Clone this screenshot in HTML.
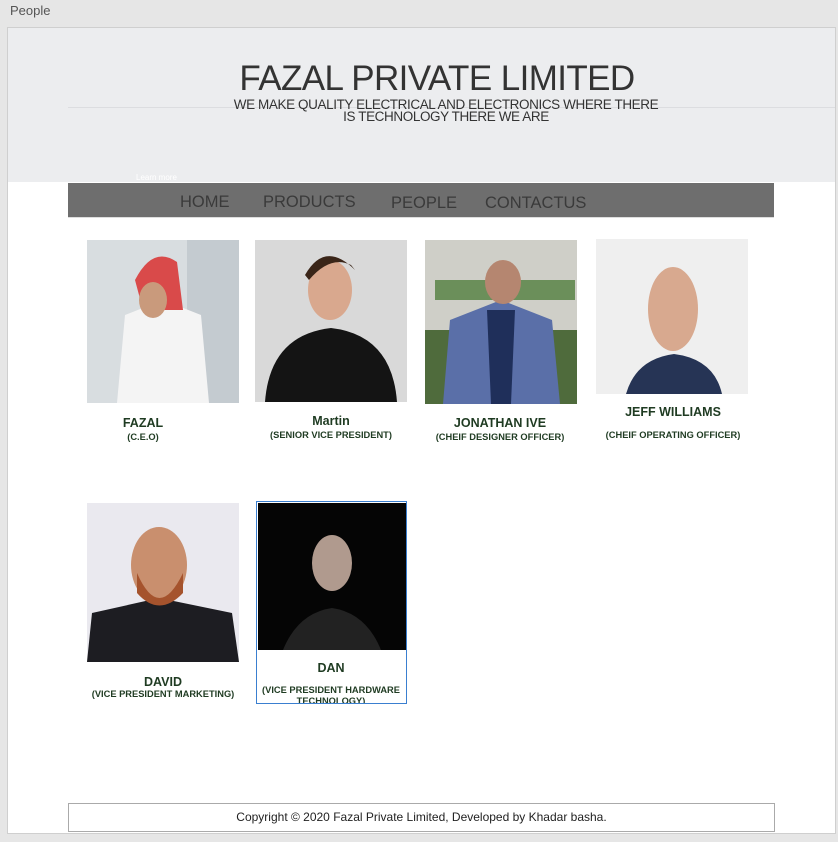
<!DOCTYPE html>
<html><head><meta charset="utf-8"><style>
*{margin:0;padding:0;box-sizing:border-box}
body{width:838px;height:842px;background:#e6e6e6;position:relative;font-family:"Liberation Sans",sans-serif;overflow:hidden}
.a{position:absolute}
.c{position:absolute;text-align:center;white-space:nowrap;transform:translateX(-50%)}
.n{font-weight:bold;font-size:12.5px;color:#1f3b22}
.s{font-weight:bold;font-size:9.3px;color:#1f3b22}
.nav{font-size:16.5px;color:#3a3a3a}
</style></head><body>
<div class="a" style="left:10px;top:3px;font-size:13px;color:#555">People</div>
<div class="a" style="left:7px;top:27px;width:829px;height:807px;background:#fff;border:1px solid #cfcfcf"></div>
<div class="a" style="left:8px;top:28px;width:827px;height:154px;background:#ecedef"></div>
<div class="a" style="left:68px;top:107px;width:767px;height:1px;background:#dcdde0"></div>
<div class="c" style="left:437px;top:59px;font-size:35px;color:#333;letter-spacing:-0.6px">FAZAL PRIVATE LIMITED</div>
<div class="c" style="left:446px;top:99px;font-size:13.5px;line-height:12px;color:#333;letter-spacing:-0.4px">WE MAKE QUALITY ELECTRICAL AND ELECTRONICS WHERE THERE<br>IS TECHNOLOGY THERE WE ARE</div>
<div class="a" style="left:136px;top:173px;font-size:8px;color:#fff">Learn more</div>
<div class="a" style="left:68px;top:183px;width:706px;height:35px;background:#6e6e6e;border-bottom:1px solid #ddd"></div>
<div class="a nav" style="left:180px;top:193px">HOME</div>
<div class="a nav" style="left:263px;top:193px">PRODUCTS</div>
<div class="a nav" style="left:391px;top:194px">PEOPLE</div>
<div class="a nav" style="left:485px;top:194px">CONTACTUS</div>

<svg class="a" style="left:87px;top:240px" width="152" height="163"><rect width="152" height="163" fill="#d8dde0"/><rect x="100" width="52" height="163" fill="#c4cbd0"/><path d="M30 163 L38 75 L76 60 L114 75 L122 163Z" fill="#f4f4f4"/><path d="M48 40 Q66 5 90 22 L96 70 L56 70Z" fill="#d94a4a"/><ellipse cx="66" cy="60" rx="14" ry="18" fill="#c99a7c"/></svg>
<svg class="a" style="left:255px;top:240px" width="152" height="162"><rect width="152" height="162" fill="#d9d9d9"/><path d="M10 162 Q15 95 76 88 Q137 95 142 162Z" fill="#141414"/><ellipse cx="75" cy="50" rx="22" ry="30" fill="#d9a88e"/><path d="M50 35 Q70 0 100 30 L96 25 Q75 15 54 40Z" fill="#3a2518"/></svg>
<svg class="a" style="left:425px;top:240px" width="152" height="164"><rect width="152" height="164" fill="#cfcfc8"/><rect y="90" width="152" height="74" fill="#4f6b3c"/><rect x="10" y="40" width="140" height="20" fill="#6b8f5a"/><path d="M18 164 L25 80 L76 60 L127 80 L135 164Z" fill="#5a6fa8"/><path d="M62 70 L90 70 L86 164 L66 164Z" fill="#1f2f5a"/><ellipse cx="78" cy="42" rx="18" ry="22" fill="#b58670"/></svg>
<svg class="a" style="left:596px;top:239px" width="152" height="155"><rect width="152" height="155" fill="#efefef"/><path d="M30 155 Q40 120 78 115 Q118 120 126 155Z" fill="#263455"/><ellipse cx="77" cy="70" rx="25" ry="42" fill="#d8a98f"/></svg>
<svg class="a" style="left:87px;top:503px" width="152" height="159"><rect width="152" height="159" fill="#eae9ef"/><path d="M0 159 L5 110 L72 95 L145 110 L152 159Z" fill="#1d1d22"/><ellipse cx="72" cy="62" rx="28" ry="38" fill="#c98f6e"/><path d="M50 70 Q72 120 96 70 L96 90 Q72 115 50 90Z" fill="#a5532d"/></svg>
<div class="a" style="left:256px;top:501px;width:151px;height:203px;border:1.5px solid #3a7fd0;background:#fff;overflow:hidden">
<svg class="a" style="left:1px;top:1px" width="148" height="147"><rect width="148" height="147" fill="#050505"/><path d="M25 147 Q40 110 74 105 Q108 110 123 147Z" fill="#222"/><ellipse cx="74" cy="60" rx="20" ry="28" fill="#b09a8e"/></svg>
<div class="c n" style="left:74px;top:159px">DAN</div>
<div class="c s" style="left:74px;top:183px;line-height:11px">(VICE PRESIDENT HARDWARE<br>TECHNOLOGY)</div>
</div>

<div class="c n" style="left:143px;top:416px">FAZAL</div>
<div class="c s" style="left:143px;top:432px">(C.E.O)</div>
<div class="c n" style="left:331px;top:414px">Martin</div>
<div class="c s" style="left:331px;top:430px">(SENIOR VICE PRESIDENT)</div>
<div class="c n" style="left:500px;top:416px">JONATHAN IVE</div>
<div class="c s" style="left:500px;top:432px">(CHEIF DESIGNER OFFICER)</div>
<div class="c n" style="left:673px;top:405px">JEFF WILLIAMS</div>
<div class="c s" style="left:673px;top:430px">(CHEIF OPERATING OFFICER)</div>
<div class="c n" style="left:163px;top:675px">DAVID</div>
<div class="c s" style="left:163px;top:689px">(VICE PRESIDENT MARKETING)</div>

<div class="a" style="left:68px;top:803px;width:707px;height:29px;border:1px solid #aaa;background:#fff;text-align:center;font-size:12px;line-height:27px;color:#222">Copyright © 2020 Fazal Private Limited, Developed by Khadar basha.</div>
</body></html>
